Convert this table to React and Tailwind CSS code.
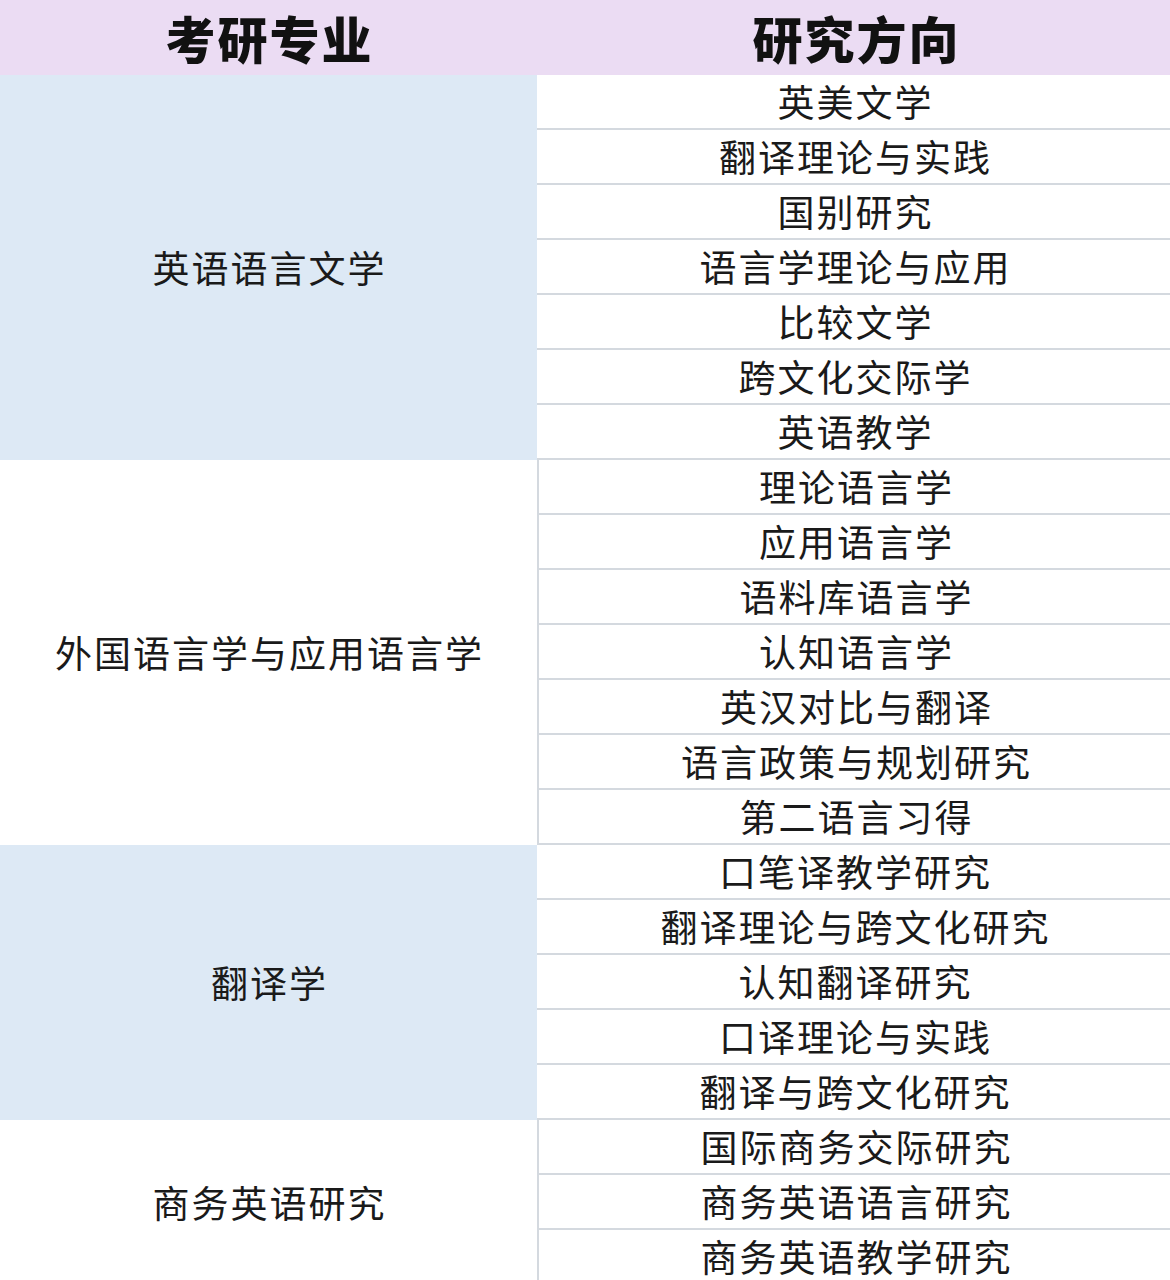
const sections = [
  {
    major: "英语语言文学",
    tint: true,
    items: ["英美文学", "翻译理论与实践", "国别研究", "语言学理论与应用", "比较文学", "跨文化交际学", "英语教学"],
  },
  {
    major: "外国语言学与应用语言学",
    tint: false,
    items: ["理论语言学", "应用语言学", "语料库语言学", "认知语言学", "英汉对比与翻译", "语言政策与规划研究", "第二语言习得"],
  },
  {
    major: "翻译学",
    tint: true,
    items: ["口笔译教学研究", "翻译理论与跨文化研究", "认知翻译研究", "口译理论与实践", "翻译与跨文化研究"],
  },
  {
    major: "商务英语研究",
    tint: false,
    items: ["国际商务交际研究", "商务英语语言研究", "商务英语教学研究"],
  },
];

const font = { fontFamily: '"Noto Sans CJK SC", "Noto Sans", sans-serif' };

const Section = ({ major, tint, items }) => (
  <div className="flex">
    <div
      className={
        "w-[537px] shrink-0 flex items-center justify-center text-[37px] tracking-[2px] pl-[2px] text-[#1a1a1a] " +
        (tint ? "bg-[#dde9f5]" : "bg-white")
      }
    >
      {major}
    </div>
    <div className={"flex-1 flex flex-col bg-white " + (tint ? "" : "border-l-2 border-[#d4d9df]")}>
      {items.map((item, i) => (
        <div
          key={i}
          className="h-[55px] border-b-2 border-[#d4d9df] flex items-center justify-center text-[37px] tracking-[2px] pl-[4px] text-[#1a1a1a]"
        >
          {item}
        </div>
      ))}
    </div>
  </div>
);

export default function App() {
  return (
    <div className="w-[1170px] h-[1280px] overflow-hidden bg-white" style={font}>
      <div className="h-[75px] flex bg-[#ebdcf3] text-[50px] font-black tracking-[2px] text-[#111]">
        <div className="w-[537px] flex items-center justify-center pl-[2px]">考研专业</div>
        <div className="flex-1 flex items-center justify-center pl-[6px]">研究方向</div>
      </div>
      {sections.map((s) => (
        <Section key={s.major} {...s} />
      ))}
    </div>
  );
}
